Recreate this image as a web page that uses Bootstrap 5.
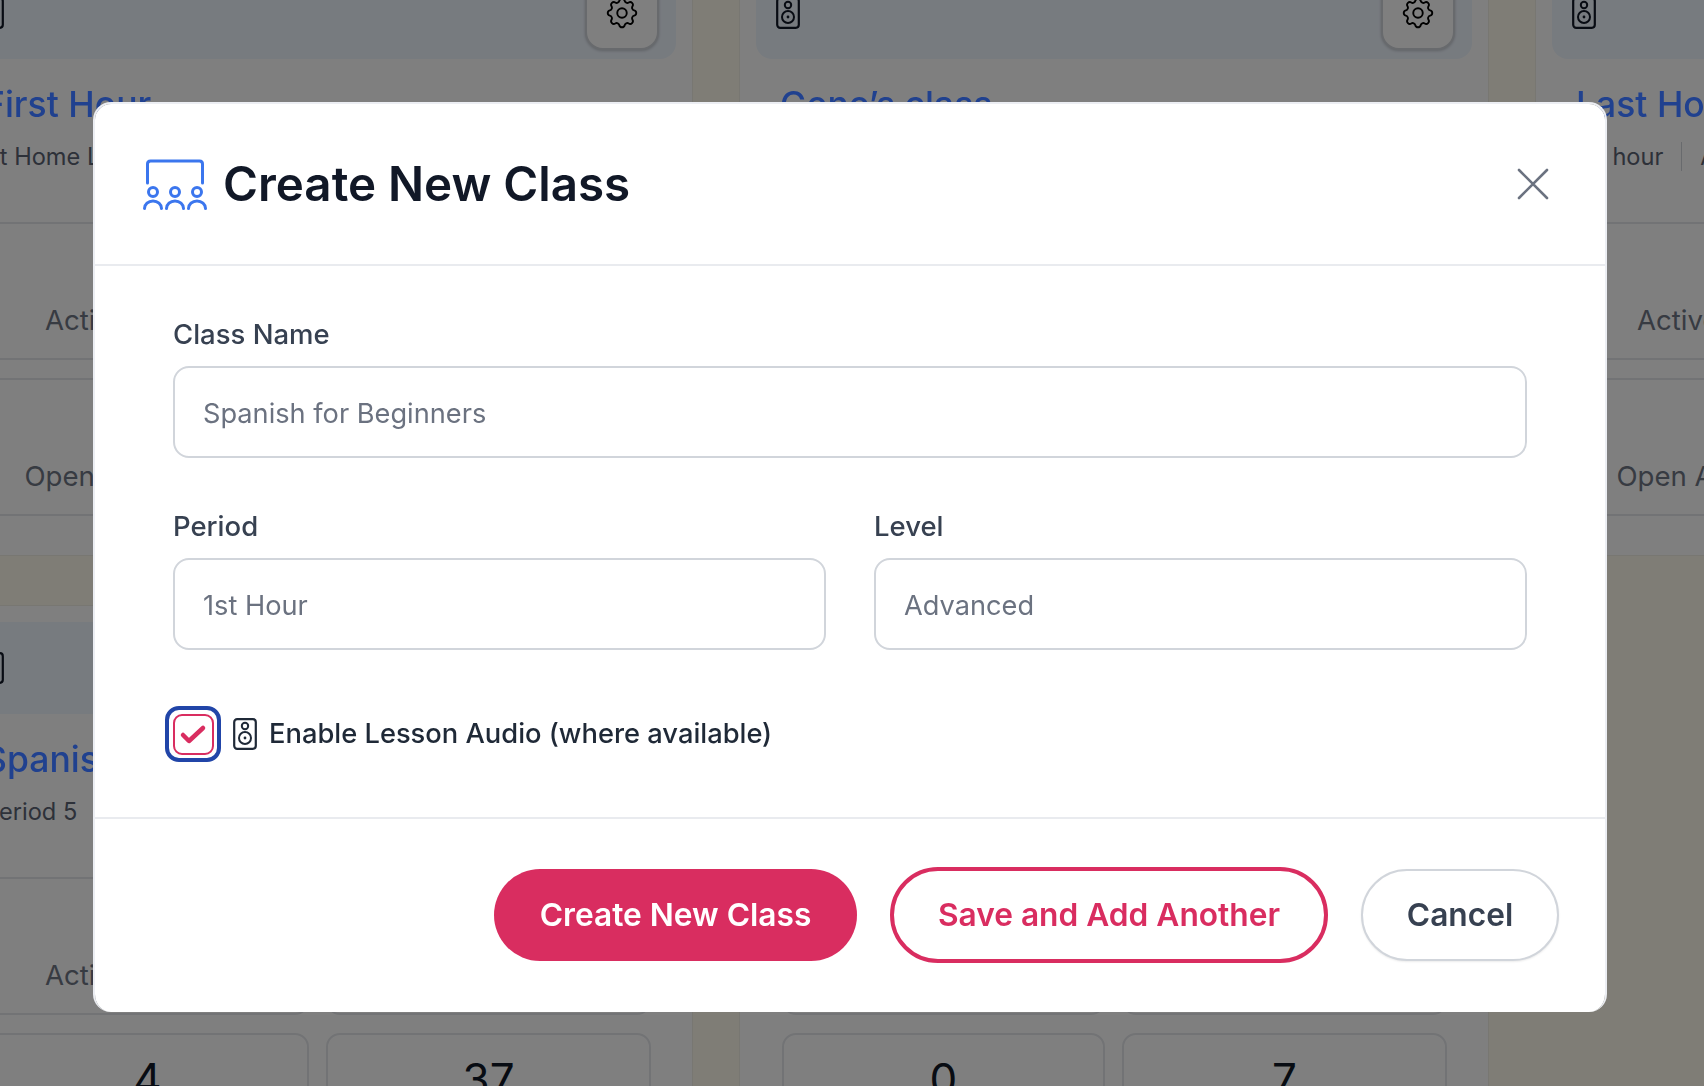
<!DOCTYPE html>
<html lang="en">
<head>
    <meta charset="UTF-8">
    <meta name="viewport" content="width=device-width, initial-scale=1">
    <title>Create New Class</title>
    <link href="https://cdn.jsdelivr.net/npm/bootstrap@5.3.0/dist/css/bootstrap.min.css" rel="stylesheet">
    <script src="https://cdn.jsdelivr.net/npm/bootstrap@5.3.0/dist/js/bootstrap.bundle.min.js"></script>
    <style>
        html, body {
            height: 100%;
            overflow: hidden;
        }
        body {
            background: #fefbec;
            font-family: Inter, "Liberation Sans", sans-serif;
            color: #111827;
        }
        .class-grid {
            display: grid;
            grid-template-columns: repeat(3, 750px);
            grid-auto-rows: 606px;
            gap: 49px 46px;
            margin: -50px 0 0 -57px;
        }
        .class-card {
            background: #fff;
            border: 1px solid #f1efe4;
            border-radius: 16px;
            padding: 16px 16px 40px;
        }
        .class-band {
            height: 92px;
            background: #eff6ff;
            border-radius: 16px;
            padding: 0 17px 0 20px;
        }
        .band-icon {
            width: 24px;
            height: 32px;
            color: #111827;
        }
        .gear-btn {
            width: 74px;
            height: 74px;
            background: #fff;
            border: 2px solid #d1d5db;
            border-radius: 18px;
            box-shadow: 0 1px 3px rgba(0, 0, 0, .2);
            margin-top: 9px;
        }
        .gear-btn svg {
            width: 38px;
            height: 38px;
        }
        .class-info {
            padding: 23px 24px 0;
            height: 163px;
        }
        .class-title {
            position: relative;
            z-index: 1052;
            font-size: 35.5px;
            font-weight: 500;
            line-height: 46px;
            color: #20418f;
            margin: 0;
            white-space: nowrap;
        }
        .class-meta {
            font-size: 23.6px;
            line-height: 32px;
            color: #5a6272;
            margin-top: 13px;
            white-space: nowrap;
        }
        .meta-sep {
            border-left: 1px solid #d1d5db;
            margin: 0 18px;
        }
        .stat-grid {
            display: grid;
            grid-template-columns: 323px 325px;
            grid-auto-rows: 138px;
            gap: 18px 17px;
            padding-left: 26px;
        }
        .stat-box {
            border: 2px solid #e5e7eb;
            border-radius: 14px;
            text-align: center;
            padding-top: 21px;
        }
        .stat-num {
            font-size: 44px;
            line-height: 46px;
            font-weight: 400;
            color: #111827;
        }
        .stat-label {
            font-size: 27.6px;
            line-height: 32px;
            margin-top: 13px;
            color: #6f7685;
            white-space: nowrap;
        }

        .modal-backdrop.show {
            opacity: .5;
        }
        .new-class-dialog {
            max-width: none;
            width: 1514px;
            margin: 102px 0 0 93px;
        }
        .new-class-dialog .modal-content {
            height: 910px;
            border: 2px solid #eceef3;
            border-bottom: 0;
            border-radius: 18px;
        }
        .new-class-dialog .modal-header {
            height: 162px;
            padding: 0 55px 0 48px;
            border-bottom: 2px solid #e9ebef;
        }
        .room-icon {
            width: 64px;
            height: 51px;
            margin: 0 16px 0 0;
            color: #3b76ee;
        }
        .new-class-dialog .modal-title {
            font-size: 47.5px;
            font-weight: 600;
            color: #111827;
            line-height: 1;
        }
        .close-x {
            width: 34px;
            height: 34px;
            color: #6b7280;
            background: none;
            border: 0;
            padding: 0;
        }
        .new-class-dialog .modal-body {
            flex: none;
            height: 551px;
            padding: 50px 78px 0 78px;
        }
        .field-label {
            display: block;
            font-size: 27.5px;
            line-height: 36px;
            font-weight: 500;
            color: #374151;
            margin-bottom: 14px;
        }
        .field-input {
            height: 92px;
            border: 2px solid #d1d5db;
            border-radius: 16px;
            font-size: 27.2px;
            padding: 2px 28px 0;
            color: #111827;
        }
        .field-input::placeholder {
            color: #6b7280;
            opacity: 1;
        }
        .level-row {
            margin-top: 50px;
        }
        .audio-row {
            margin-top: 56px;
            margin-left: -8px;
        }
        .check-ring {
            width: 56px;
            height: 56px;
            border: 4px solid #2145a8;
            border-radius: 14px;
            flex: none;
        }
        .check-box {
            width: 41px;
            height: 41px;
            border: 2px solid #d92d60;
            border-radius: 9px;
        }
        .check-box svg {
            width: 28px;
            height: 28px;
            color: #d92d60;
        }
        .audio-icon {
            width: 24px;
            height: 32px;
            margin: 0 12px 0 12px;
            color: #1f2937;
        }
        .audio-text {
            font-size: 27.3px;
            font-weight: 500;
            color: #1f2937;
            margin: 0;
        }
        .new-class-dialog .modal-footer {
            flex: none;
            height: 193px;
            border-top: 2px solid #e9ebef;
            padding: 50px 46px 0 0;
            gap: 33px;
            align-items: start;
        }
        .pill-btn {
            margin: 0;
            height: 92px;
            border-radius: 46px;
            font-size: 31.7px;
            font-weight: 600;
            white-space: nowrap;
        }
        .pill-primary {
            width: 363px;
            background: #d92d60;
            border: 0;
            color: #fff;
        }
        .pill-outline {
            width: 438px;
            height: 96px;
            margin-top: -2px;
            border-radius: 48px;
            background: #fff;
            border: 4px solid #d92d60;
            color: #d92d60;
        }
        .pill-cancel {
            width: 198px;
            background: #fff;
            border: 2px solid #d1d5db;
            color: #374151;
            box-shadow: 0 1px 2px rgba(0, 0, 0, .08);
        }
    </style>
</head>
<body>
    <svg class="d-none">
        <symbol id="speaker" viewBox="0 0 24 32">
            <rect x="1.2" y="1.2" width="21.6" height="29.6" rx="3" fill="none" stroke="currentColor" stroke-width="2.2"/>
            <circle cx="12" cy="8" r="3.2" fill="none" stroke="currentColor" stroke-width="2"/>
            <circle cx="12" cy="20" r="6" fill="none" stroke="currentColor" stroke-width="2"/>
            <circle cx="12" cy="20" r="1.4" fill="currentColor"/>
        </symbol>
        <symbol id="gear" viewBox="0 0 24 24">
            <path fill="none" stroke="currentColor" stroke-width="1.2" stroke-linejoin="round" d="M10.325 4.317c.426-1.756 2.924-1.756 3.35 0a1.724 1.724 0 002.573 1.066c1.543-.94 3.31.826 2.37 2.37a1.724 1.724 0 001.065 2.572c1.756.426 1.756 2.924 0 3.35a1.724 1.724 0 00-1.066 2.573c.94 1.543-.826 3.31-2.37 2.37a1.724 1.724 0 00-2.572 1.065c-.426 1.756-2.924 1.756-3.35 0a1.724 1.724 0 00-2.573-1.066c-1.543.94-3.31-.826-2.37-2.37a1.724 1.724 0 00-1.065-2.572c-1.756-.426-1.756-2.924 0-3.35a1.724 1.724 0 001.066-2.573c-.94-1.543.826-3.31 2.37-2.37.996.608 2.296.07 2.572-1.065z"/>
            <circle cx="12" cy="12" r="3" fill="none" stroke="currentColor" stroke-width="1.2"/>
        </symbol>
    </svg>

    <div class="class-grid">
        <div class="class-card">
            <div class="class-band d-flex justify-content-between">
                <svg class="band-icon mt-auto mb-auto"><use href="#speaker"/></svg>
                <button class="gear-btn d-flex align-items-center justify-content-center"><svg><use href="#gear"/></svg></button>
            </div>
            <div class="class-info">
                <h3 class="class-title">First Hour</h3>
                <div class="class-meta">At Home Learning<span class="meta-sep"></span>Beginner</div>
            </div>
            <div class="stat-grid">
                <div class="stat-box"><div class="stat-num">4</div><div class="stat-label">Active Students</div></div>
                <div class="stat-box"><div class="stat-num">37</div><div class="stat-label">Total Lessons</div></div>
                <div class="stat-box"><div class="stat-num">2</div><div class="stat-label">Open Assignments</div></div>
                <div class="stat-box"><div class="stat-num">5</div><div class="stat-label">Completed</div></div>
            </div>
        </div>
        <div class="class-card">
            <div class="class-band d-flex justify-content-between">
                <svg class="band-icon mt-auto mb-auto"><use href="#speaker"/></svg>
                <button class="gear-btn d-flex align-items-center justify-content-center"><svg><use href="#gear"/></svg></button>
            </div>
            <div class="class-info">
                <h3 class="class-title">Gene’s class</h3>
                <div class="class-meta">Period 2<span class="meta-sep"></span>Advanced</div>
            </div>
            <div class="stat-grid">
                <div class="stat-box"><div class="stat-num">0</div><div class="stat-label">Active Students</div></div>
                <div class="stat-box"><div class="stat-num">7</div><div class="stat-label">Total Lessons</div></div>
                <div class="stat-box"><div class="stat-num">1</div><div class="stat-label">Open Assignments</div></div>
                <div class="stat-box"><div class="stat-num">3</div><div class="stat-label">Completed</div></div>
            </div>
        </div>
        <div class="class-card">
            <div class="class-band d-flex justify-content-between">
                <svg class="band-icon mt-auto mb-auto"><use href="#speaker"/></svg>
                <button class="gear-btn d-flex align-items-center justify-content-center"><svg><use href="#gear"/></svg></button>
            </div>
            <div class="class-info">
                <h3 class="class-title">Last Hour</h3>
                <div class="class-meta">1st hour<span class="meta-sep"></span>Advanced</div>
            </div>
            <div class="stat-grid">
                <div class="stat-box"><div class="stat-num">6</div><div class="stat-label">Active Students</div></div>
                <div class="stat-box"><div class="stat-num">12</div><div class="stat-label">Total Lessons</div></div>
                <div class="stat-box"><div class="stat-num">0</div><div class="stat-label">Open Assignments</div></div>
                <div class="stat-box"><div class="stat-num">4</div><div class="stat-label">Completed</div></div>
            </div>
        </div>
        <div class="class-card">
            <div class="class-band d-flex justify-content-between">
                <svg class="band-icon mt-auto mb-auto"><use href="#speaker"/></svg>
                <button class="gear-btn d-flex align-items-center justify-content-center"><svg><use href="#gear"/></svg></button>
            </div>
            <div class="class-info">
                <h3 class="class-title">Spanish 2</h3>
                <div class="class-meta">Period 5<span class="meta-sep"></span>Intermediate</div>
            </div>
            <div class="stat-grid">
                <div class="stat-box"><div class="stat-num">9</div><div class="stat-label">Active Students</div></div>
                <div class="stat-box"><div class="stat-num">21</div><div class="stat-label">Total Lessons</div></div>
                <div class="stat-box"><div class="stat-num">4</div><div class="stat-label">Open Assignments</div></div>
                <div class="stat-box"><div class="stat-num">37</div><div class="stat-label">Completed</div></div>
            </div>
        </div>
        <div class="class-card">
            <div class="class-band d-flex justify-content-between">
                <svg class="band-icon mt-auto mb-auto"><use href="#speaker"/></svg>
                <button class="gear-btn d-flex align-items-center justify-content-center"><svg><use href="#gear"/></svg></button>
            </div>
            <div class="class-info">
                <h3 class="class-title">Spanish 3</h3>
                <div class="class-meta">Period 6<span class="meta-sep"></span>Advanced</div>
            </div>
            <div class="stat-grid">
                <div class="stat-box"><div class="stat-num">3</div><div class="stat-label">Active Students</div></div>
                <div class="stat-box"><div class="stat-num">15</div><div class="stat-label">Total Lessons</div></div>
                <div class="stat-box"><div class="stat-num">0</div><div class="stat-label">Open Assignments</div></div>
                <div class="stat-box"><div class="stat-num">7</div><div class="stat-label">Completed</div></div>
            </div>
        </div>
    </div>

    <div class="modal-backdrop show"></div>
    <div class="modal d-block" tabindex="-1">
        <div class="modal-dialog new-class-dialog">
            <div class="modal-content">
                <div class="modal-header">
                    <svg class="room-icon" viewBox="0 0 64 51" fill="none" stroke="currentColor" stroke-width="3" stroke-linecap="round">
                        <path d="M4.500 24V5q0-3 3-3h49q3 0 3 3v19"/>
                        <circle cx="10" cy="33" r="4.500"/>
                        <circle cx="32" cy="33" r="4.500"/>
                        <circle cx="54" cy="33" r="4.500"/>
                        <path d="M1.500 49.500a8.500 7.500 0 0 1 17 0M23.500 49.500a8.500 7.500 0 0 1 17 0M45.500 49.500a8.500 7.500 0 0 1 17 0"/>
                    </svg>
                    <h1 class="modal-title">Create New Class</h1>
                    <button class="close-x ms-auto" aria-label="Close">
                        <svg viewBox="0 0 34 34" fill="none" stroke="currentColor" stroke-width="2.600" stroke-linecap="round"><path d="M3 3l28 28M31 3L3 31"/></svg>
                    </button>
                </div>
                <div class="modal-body">
                    <label class="field-label">Class Name</label>
                    <input type="text" class="form-control field-input" placeholder="Spanish for Beginners">
                    <div class="row level-row gx-5">
                        <div class="col-6">
                            <label class="field-label">Period</label>
                            <input type="text" class="form-control field-input" placeholder="1st Hour">
                        </div>
                        <div class="col-6">
                            <label class="field-label">Level</label>
                            <input type="text" class="form-control field-input" placeholder="Advanced">
                        </div>
                    </div>
                    <div class="audio-row d-flex align-items-center">
                        <div class="check-ring d-flex align-items-center justify-content-center">
                            <div class="check-box d-flex align-items-center justify-content-center">
                                <svg viewBox="0 0 28 28" fill="none" stroke="currentColor" stroke-width="4.500" stroke-linecap="round" stroke-linejoin="round"><path d="M4 15l6 6L24 8"/></svg>
                            </div>
                        </div>
                        <svg class="audio-icon"><use href="#speaker"/></svg>
                        <p class="audio-text">Enable Lesson Audio (where available)</p>
                    </div>
                </div>
                <div class="modal-footer">
                    <button class="btn pill-btn pill-primary">Create New Class</button>
                    <button class="btn pill-btn pill-outline">Save and Add Another</button>
                    <button class="btn pill-btn pill-cancel">Cancel</button>
                </div>
            </div>
        </div>
    </div>
</body>
</html>
